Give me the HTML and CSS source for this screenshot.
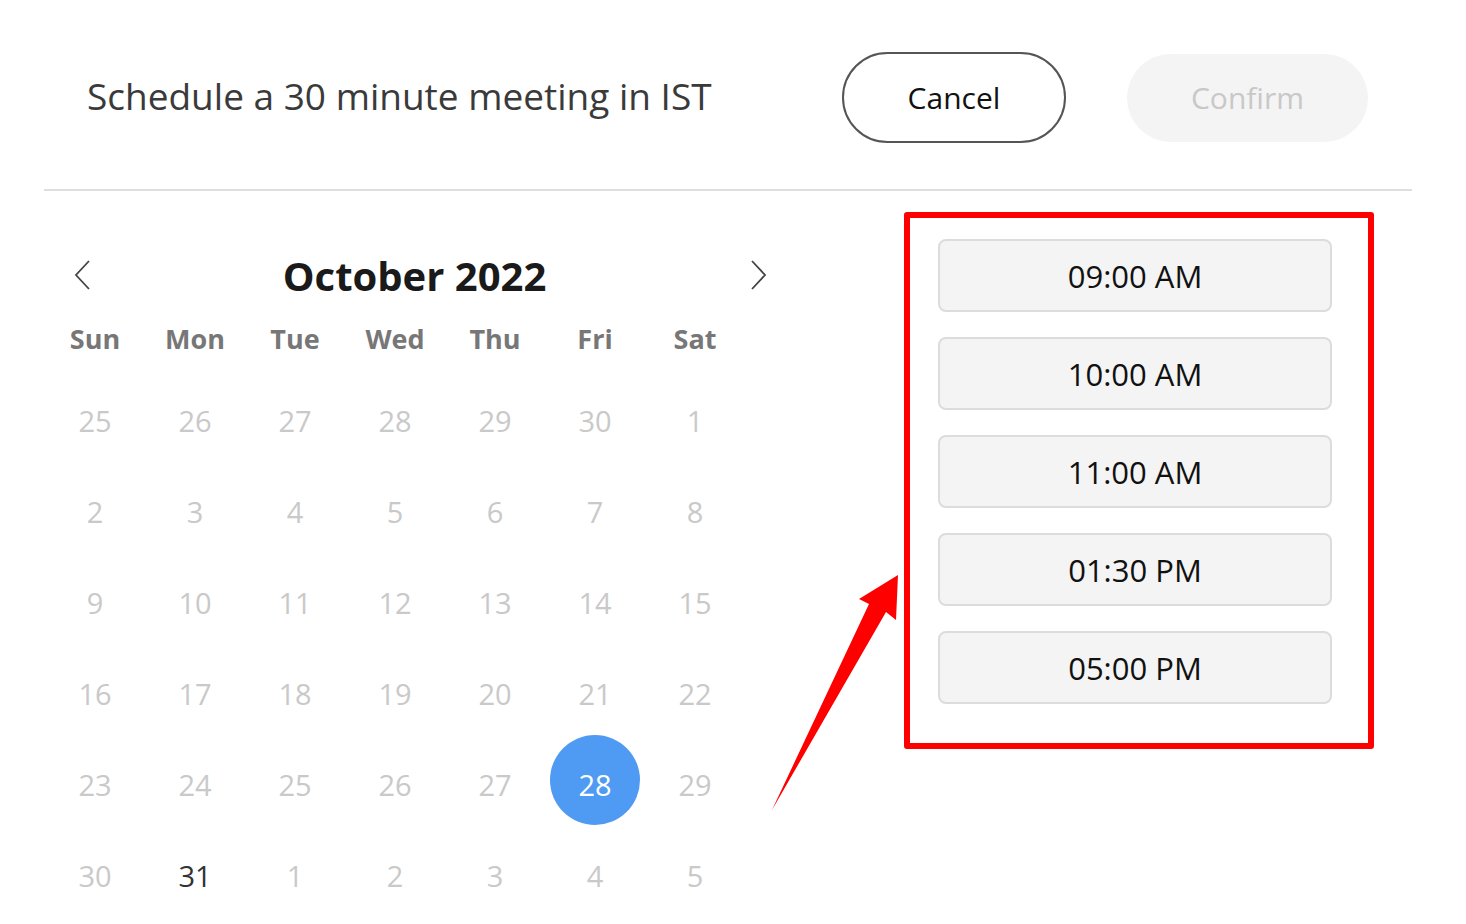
FILE: index.html
```html
<!DOCTYPE html>
<html lang="en">
<head>
<meta charset="utf-8">
<title>Schedule meeting</title>
<link rel="stylesheet" href="styles.css">
</head>
<body>
<header class="header">
  <h1 class="title">Schedule a 30 minute meeting in IST</h1>
  <div class="actions">
    <button class="btn btn-cancel">Cancel</button>
    <button class="btn btn-confirm" disabled>Confirm</button>
  </div>
</header>
<main class="main">
  <section class="calendar">
    <div class="nav">
      <button class="nav-btn" aria-label="Previous month">
        <svg width="18" height="30" viewBox="0 0 18 30"><polyline points="15,1 2,15 15,29" fill="none" stroke="#444" stroke-width="1.8"/></svg>
      </button>
      <div class="month">October 2022</div>
      <button class="nav-btn" aria-label="Next month">
        <svg width="18" height="30" viewBox="0 0 18 30"><polyline points="3,1 16,15 3,29" fill="none" stroke="#444" stroke-width="1.8"/></svg>
      </button>
    </div>
    <div class="weekdays">
      <span>Sun</span><span>Mon</span><span>Tue</span><span>Wed</span><span>Thu</span><span>Fri</span><span>Sat</span>
    </div>
    <div class="days">
      <span class="day">25</span><span class="day">26</span><span class="day">27</span><span class="day">28</span><span class="day">29</span><span class="day">30</span><span class="day">1</span>
      <span class="day">2</span><span class="day">3</span><span class="day">4</span><span class="day">5</span><span class="day">6</span><span class="day">7</span><span class="day">8</span>
      <span class="day">9</span><span class="day">10</span><span class="day">11</span><span class="day">12</span><span class="day">13</span><span class="day">14</span><span class="day">15</span>
      <span class="day">16</span><span class="day">17</span><span class="day">18</span><span class="day">19</span><span class="day">20</span><span class="day">21</span><span class="day">22</span>
      <span class="day">23</span><span class="day">24</span><span class="day">25</span><span class="day">26</span><span class="day">27</span><span class="day selected"><span class="circle">28</span></span><span class="day">29</span>
      <span class="day">30</span><span class="day active">31</span><span class="day">1</span><span class="day">2</span><span class="day">3</span><span class="day">4</span><span class="day">5</span>
    </div>
  </section>
  <section class="slots">
    <button class="slot">09:00 AM</button>
    <button class="slot">10:00 AM</button>
    <button class="slot">11:00 AM</button>
    <button class="slot">01:30 PM</button>
    <button class="slot">05:00 PM</button>
  </section>
  <svg class="pointer" width="140" height="250" viewBox="760 570 140 250" aria-hidden="true">
    <polygon points="772,810 869,604 859,599 898,575 896,620 886,612" fill="#ff0000"/>
  </svg>
</main>
</body>
</html>
```

FILE: styles.css
```css
* { box-sizing: border-box; }

html, body {
  margin: 0;
  padding: 0;
  background: #fff;
}

body {
  font-family: "Open Sans", "Noto Sans", sans-serif;
  color: #222;
  width: 1466px;
  height: 924px;
  overflow: hidden;
}

.header {
  display: flex;
  align-items: center;
  justify-content: space-between;
  margin: 0 54px 0 44px;
  padding: 52px 44px 46px 43px;
  border-bottom: 2px solid #dedede;
}

.title {
  margin: 0;
  font-size: 37px;
  font-weight: 400;
  color: #3a3a3a;
  line-height: 1;
  padding-bottom: 4px;
}

.actions {
  display: flex;
  align-items: center;
  gap: 61px;
}

.btn {
  font-family: inherit;
  font-size: 30px;
  height: 91px;
  border-radius: 46px;
  cursor: pointer;
}

.btn-cancel {
  width: 224px;
  background: #fff;
  border: 2px solid #555;
  color: #111;
}

.btn-confirm {
  width: 241px;
  height: 88px;
  background: #f4f4f4;
  border: none;
  color: #c8c8c8;
}

.main {
  position: relative;
  display: flex;
  align-items: flex-start;
}

.calendar {
  width: 700px;
  margin-left: 45px;
  padding-top: 57px;
}

.nav {
  display: grid;
  grid-template-columns: 30px 1fr 30px;
  align-items: center;
  height: 50px;
  margin-left: 23px;
  width: 705px;
}

.nav-btn {
  display: flex;
  align-items: center;
  justify-content: center;
  background: none;
  border: none;
  padding: 0 0 2px;
  height: 50px;
  cursor: pointer;
}

.month {
  text-align: center;
  font-size: 40px;
  font-weight: 700;
  color: #1a1a1a;
  padding-right: 12px;
}

.weekdays {
  display: grid;
  grid-template-columns: repeat(7, 100px);
  margin-top: 20px;
  height: 40px;
  align-items: center;
}

.weekdays span {
  text-align: center;
  font-size: 27px;
  font-weight: 700;
  color: #777;
}

.days {
  display: grid;
  grid-template-columns: repeat(7, 100px);
  grid-auto-rows: 91px;
  margin-top: 17px;
}

.day {
  display: flex;
  align-items: center;
  justify-content: center;
  font-size: 29px;
  color: #c9c9c9;
}

.day.active {
  color: #333;
}

.circle {
  display: flex;
  align-items: center;
  justify-content: center;
  width: 90px;
  height: 90px;
  border-radius: 50%;
  background: #4f9bf4;
  color: #fff;
  margin-top: -10px;
  padding-top: 10px;
}

.slots {
  display: flex;
  flex-direction: column;
  gap: 25px;
  width: 470px;
  margin-left: 159px;
  margin-top: 21px;
  padding: 21px 36px 39px 28px;
  border: 6px solid #ff0000;
  border-radius: 3px;
}

.slot {
  height: 73px;
  font-family: inherit;
  font-size: 31px;
  color: #111;
  background: #f4f4f4;
  border: 2px solid #dcdcdc;
  border-radius: 8px;
  cursor: pointer;
}

.pointer {
  position: absolute;
  left: 760px;
  top: 379px;
}
```
